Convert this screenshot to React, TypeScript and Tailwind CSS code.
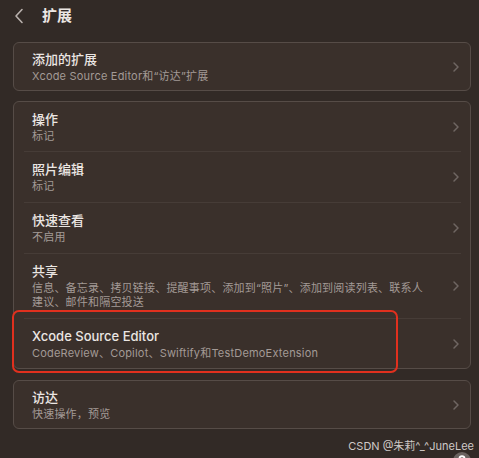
import React from "react";

type Row = { title: string; sub: string[]; h: number };

const Chevron = () => (
  <svg width="8" height="12" viewBox="0 0 8 12" className="shrink-0">
    <path d="M2 2 L6 6 L2 10" fill="none" stroke="#6f6662" strokeWidth="1.5" strokeLinecap="round" strokeLinejoin="round" />
  </svg>
);

const ItemRow = ({ row, last }: { row: Row; last?: boolean }) => (
  <div className="flex flex-col pl-[18px]" style={{ height: row.h }}>
    <div className="flex flex-1 items-center pr-[10px]">
      <div className="flex flex-1 flex-col">
        <div className="text-[13px] leading-[16px] font-medium text-[#ebe6e3]">{row.title}</div>
        <div className="mt-[2px] flex flex-col">
          {row.sub.map((s, i) => (
            <div key={i} className="text-[11px] leading-[14px] tracking-[0.2px] text-[#a39a96]">{s}</div>
          ))}
        </div>
      </div>
      <Chevron />
    </div>
    {!last && <div className="ml-[-8px] mr-[9px] h-px bg-[#463c37]" />}
  </div>
);

const Card = ({ rows }: { rows: Row[] }) => (
  <div className="ml-[13px] w-[458px] rounded-[6px] border border-[#564c47] bg-[#3a302b] overflow-hidden">
    {rows.map((r, i) => (
      <ItemRow key={i} row={r} last={i === rows.length - 1} />
    ))}
  </div>
);

export default function App() {
  const group: Row[] = [
    { title: "操作", sub: ["标记"], h: 50 },
    { title: "照片编辑", sub: ["标记"], h: 51 },
    { title: "快速查看", sub: ["不启用"], h: 51 },
    {
      title: "共享",
      sub: ["信息、备忘录、拷贝链接、提醒事项、添加到“照片”、添加到阅读列表、联系人", "建议、邮件和隔空投送"],
      h: 65,
    },
    { title: "Xcode Source Editor", sub: ["CodeReview、Copilot、Swiftify和TestDemoExtension"], h: 49 },
  ];

  return (
    <div
      className="relative h-[458px] w-[479px] overflow-hidden bg-[#322a26]"
      style={{ fontFamily: "Inter, 'Noto Sans CJK SC', sans-serif" }}
    >
      <div className="flex h-[42px] items-center pb-[10px]">
        <svg width="10" height="16" viewBox="0 0 10 16" className="ml-[14px]">
          <path d="M8 1.5 L2 8 L8 14.5" fill="none" stroke="#b9b1ad" strokeWidth="1.6" strokeLinecap="round" strokeLinejoin="round" />
        </svg>
        <div className="ml-[18px] text-[15px] font-bold text-[#ebe6e3]">扩展</div>
      </div>

      <Card rows={[{ title: "添加的扩展", sub: ["Xcode Source Editor和“访达”扩展"], h: 47 }]} />
      <div className="h-[10px]" />
      <Card rows={group} />
      <div className="h-[11px]" />
      <Card rows={[{ title: "访达", sub: ["快速操作，预览"], h: 47 }]} />

      <div className="absolute left-[12px] top-[310px] h-[63px] w-[386px] rounded-[7px] border-2 border-[#e0301e]" />

      <div className="absolute right-[5px] top-[439px] text-[11px] leading-[14px] text-[#cfc9c6]">CSDN @朱莉^_^JuneLee</div>
      <svg width="20" height="20" viewBox="0 0 20 20" className="absolute left-[452px] top-[451px]">
        <circle cx="10" cy="10" r="9" fill="#6b6360" />
        <path d="M7.5 7.5 C7.5 4.5 12.5 4.5 12.5 7.5 C12.5 9 10 9.3 10 11.5" fill="none" stroke="#ffffff" strokeWidth="1.8" strokeLinecap="round" />
      </svg>
    </div>
  );
}
